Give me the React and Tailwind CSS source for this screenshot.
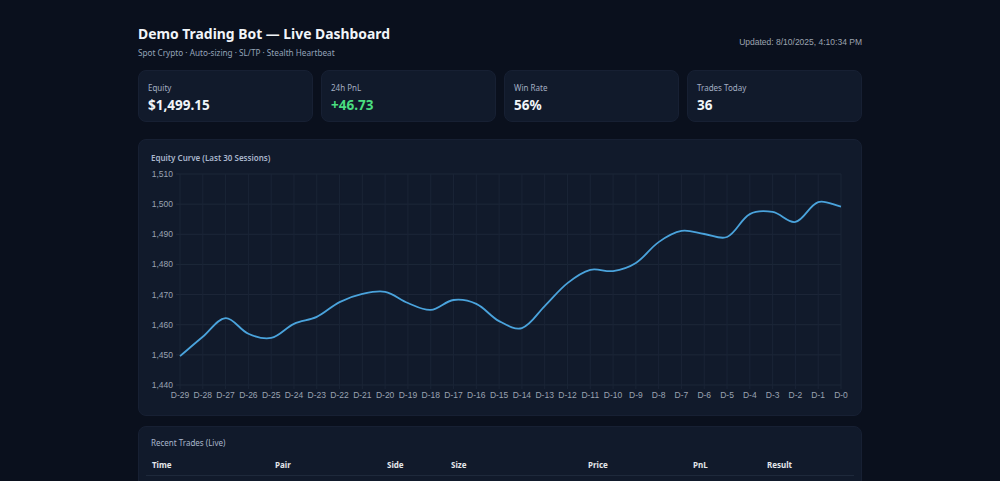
const data = [
  1449.6, 1456.0, 1462.2, 1457.0, 1455.6, 1460.3, 1462.6, 1467.5, 1470.2, 1470.9,
  1467.2, 1464.9, 1468.2, 1466.9, 1461.2, 1458.9, 1466.2, 1473.8, 1478.2, 1477.8,
  1480.5, 1487.4, 1491.1, 1490.1, 1489.1, 1496.7, 1497.4, 1494.1, 1500.7, 1499.15,
];

const stats = [
  { label: "Equity", value: "$1,499.15", color: "text-[#f1f5f9]" },
  { label: "24h PnL", value: "+46.73", color: "text-[#4ade80]" },
  { label: "Win Rate", value: "56%", color: "text-[#f1f5f9]" },
  { label: "Trades Today", value: "36", color: "text-[#f1f5f9]" },
];

const cols = [
  { name: "Time", w: "w-[123px]" },
  { name: "Pair", w: "w-[112px]" },
  { name: "Side", w: "w-[64px]" },
  { name: "Size", w: "w-[137px]" },
  { name: "Price", w: "w-[105px]" },
  { name: "PnL", w: "w-[74px]" },
  { name: "Result", w: "" },
];

// plot box inside the svg
const X0 = 34;
const X1 = 695;
const yOf = (v) => 7 + (1510 - v) * (211 / 70);
const xOf = (i) => X0 + (i * (X1 - X0)) / 29;

function curvePath(values, tension = 0.35) {
  const pts = values.map((v, i) => [xOf(i), yOf(v)]);
  const cps = pts.map((p, i) => {
    const prev = pts[i - 1] || p;
    const next = pts[i + 1] || p;
    const d01 = Math.hypot(p[0] - prev[0], p[1] - prev[1]);
    const d12 = Math.hypot(next[0] - p[0], next[1] - p[1]);
    const sum = d01 + d12 || 1;
    const fa = (tension * d01) / sum;
    const fb = (tension * d12) / sum;
    return {
      prev: [p[0] - fa * (next[0] - prev[0]), p[1] - fa * (next[1] - prev[1])],
      next: [p[0] + fb * (next[0] - prev[0]), p[1] + fb * (next[1] - prev[1])],
    };
  });
  let d = `M${pts[0][0]},${pts[0][1]}`;
  for (let i = 1; i < pts.length; i++) {
    const a = cps[i - 1].next;
    const b = cps[i].prev;
    d += ` C${a[0]},${a[1]} ${b[0]},${b[1]} ${pts[i][0]},${pts[i][1]}`;
  }
  return d;
}

function EquityChart() {
  const ticks = [1510, 1500, 1490, 1480, 1470, 1460, 1450, 1440];
  return (
    <svg width="708" height="240" className="mt-[3px] block">
      {ticks.map((t) => (
        <g key={t}>
          <line x1={X0 - 4} x2={X1} y1={yOf(t)} y2={yOf(t)} stroke="#1d2739" strokeWidth="1" />
          <text
            x="27"
            y={yOf(t) + 3}
            textAnchor="end"
            fontSize="8.5"
            fill="#9aa3b2"
            fontFamily="'Liberation Sans', Arial, sans-serif"
          >
            {t.toLocaleString("en-US")}
          </text>
        </g>
      ))}
      {data.map((_, i) => (
        <g key={i}>
          <line x1={xOf(i)} x2={xOf(i)} y1={yOf(1510)} y2={yOf(1440) + 4} stroke="#1a2436" strokeWidth="1" />
          <text
            x={xOf(i)}
            y="231"
            textAnchor="middle"
            fontSize="8.5"
            fill="#9aa3b2"
            fontFamily="'Liberation Sans', Arial, sans-serif"
          >
            {`D-${29 - i}`}
          </text>
        </g>
      ))}
      <path d={curvePath(data)} fill="none" stroke="#4aa3dc" strokeWidth="1.8" strokeLinejoin="round" />
    </svg>
  );
}

export default function App() {
  return (
    <div className="min-h-screen bg-[#0a101d] font-['Noto_Sans','Open_Sans',sans-serif]">
      <div className="mx-auto w-[724px] pt-[24px]">
        {/* Header */}
        <div className="flex items-center justify-between">
          <div>
            <h1 className="text-[13.9px] font-bold leading-[20px] text-[#f1f5f9]">
              Demo Trading Bot — Live Dashboard
            </h1>
            <p className="mt-[2px] text-[8.2px] leading-[14px] text-[#94a3b8]">
              Spot Crypto · Auto-sizing · SL/TP · Stealth Heartbeat
            </p>
          </div>
          <div className="font-['Liberation_Sans',Arial,sans-serif] text-[8.5px] text-[#9ca3af]">
            Updated: 8/10/2025, 4:10:34 PM
          </div>
        </div>

        {/* Stat cards */}
        <div className="mt-[10px] grid grid-cols-4 gap-[8px]">
          {stats.map((s) => (
            <div
              key={s.label}
              className="h-[52px] rounded-lg border border-[#172033] bg-[#111a2b] px-[9px] pt-[11px]"
            >
              <div className="text-[8px] leading-[12px] text-[#a3aec2]">{s.label}</div>
              <div className={`mt-[1px] text-[13.5px] font-bold leading-[20px] ${s.color}`}>{s.value}</div>
            </div>
          ))}
        </div>

        {/* Equity curve */}
        <div className="mt-[17px] rounded-lg border border-[#172033] bg-[#111a2b] px-[7px] pb-[8px] pt-[12px]">
          <div className="px-[5px] text-[8px] font-semibold leading-[12px] text-[#a9b6cc]">
            Equity Curve (Last 30 Sessions)
          </div>
          <EquityChart />
        </div>

        {/* Recent trades */}
        <div className="mt-[10px] h-[80px] rounded-lg border border-[#172033] bg-[#111a2b] px-[7px] pt-[10px]">
          <div className="px-[5px] text-[8px] leading-[12px] text-[#a9b6cc]">Recent Trades (Live)</div>
          <table className="mt-[6px] w-full table-fixed border-collapse">
            <thead>
              <tr className="border-b border-[#1e293b]">
                {cols.map((c) => (
                  <th
                    key={c.name}
                    className={`${c.w} px-[6px] pb-[4px] pt-[4px] text-left text-[8px] font-bold leading-[12px] text-[#e5e7eb]`}
                  >
                    {c.name}
                  </th>
                ))}
              </tr>
            </thead>
          </table>
        </div>
      </div>
    </div>
  );
}
